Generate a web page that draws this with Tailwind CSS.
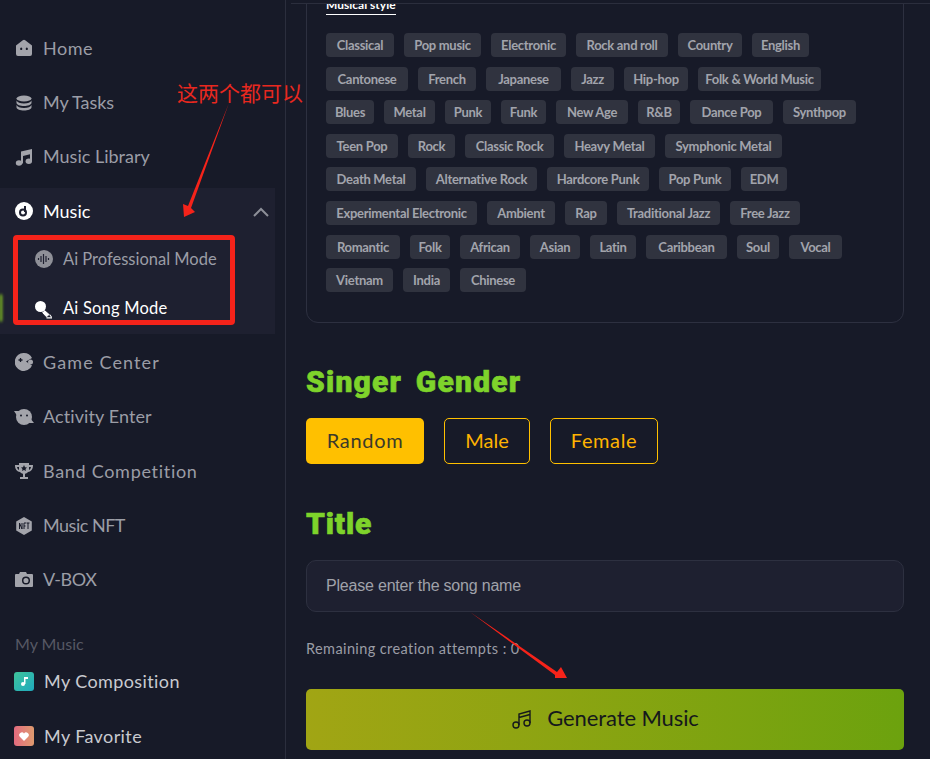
<!DOCTYPE html>
<html lang="en">
<head>
    <meta charset="UTF-8">
    <title>Ai Song Mode</title>
    <script src="https://cdn.jsdelivr.net/npm/@tailwindcss/browser@4"></script>
</head>
<body class="bg-[#171a28] font-['Lato',sans-serif]">
<div class="relative w-[930px] h-[759px] overflow-hidden flex">

    <!-- sidebar -->
    <aside class="w-[286px] h-full shrink-0 border-r border-[#2b2e3d] pt-[21px] text-[18px] text-[#9b9da6]">
        <a class="h-[54.4px] pl-[15px] flex items-center gap-[10px] tracking-[0.5px]">
            <svg class="w-[18px] h-[18px]" viewBox="0 0 18 18" fill="#a3a4ab"><path fill-rule="evenodd" d="M1 6.500 7.800 1.200a2 2 0 0 1 2.400 0L17 6.500V15a2 2 0 0 1-2 2H3a2 2 0 0 1-2-2zM6.200 8.500a1.100 1.300 0 1 0 .01 0zM11.800 8.500a1.100 1.300 0 1 0 .01 0z"/></svg>
            Home
        </a>
        <a class="h-[54.4px] pl-[15px] flex items-center gap-[10px] tracking-[-0.1px]">
            <svg class="w-[18px] h-[18px]" viewBox="0 0 18 18" fill="#a3a4ab"><ellipse cx="9" cy="4.500" rx="7.500" ry="3"/><path d="M1.500 6.500c1 2 3.500 3 7.500 3s6.500-1 7.500-3V9c-.5 2-3.500 3-7.500 3s-7-1-7.500-3z"/><path d="M1.500 11c1 2 3.500 3 7.500 3s6.500-1 7.500-3v2.500c-.5 2-3.500 3-7.500 3s-7-1-7.500-3z"/></svg>
            My Tasks
        </a>
        <a class="h-[54.4px] pl-[15px] flex items-center gap-[10px] tracking-[0px]">
            <svg class="w-[18px] h-[18px]" viewBox="0 0 18 18" fill="#a3a4ab"><path d="M6 3.500 17 1v12.500h-2V6.300L8 7.900v7.600H6z"/><ellipse cx="4" cy="15" rx="3.200" ry="2.700"/><ellipse cx="13.800" cy="13.300" rx="3.200" ry="2.700"/></svg>
            Music Library
        </a>

        <!-- music group -->
        <div class="mt-[4px] w-[275px] h-[146px] bg-[#1e2030]">
            <a class="h-[46px] pl-[15px] pr-[6px] flex items-center gap-[10px] text-white">
                <svg class="w-[18px] h-[18px]" viewBox="0 0 18 18"><circle cx="9" cy="9" r="9" fill="#fff"/><circle cx="8" cy="10.500" r="3" fill="none" stroke="#1e2030" stroke-width="2"/><path d="M10 10V4" stroke="#1e2030" stroke-width="2"/></svg>
                Music
                <svg class="ml-auto mt-[2px] w-[16px] h-[10px]" viewBox="0 0 16 10" fill="none" stroke="#8d8f98" stroke-width="2"><path d="M1 9l7-7 7 7"/></svg>
            </a>
            <a class="h-[50px] pl-[35px] flex items-center gap-[10px] text-[16.500px] text-[#9b9da6]">
                <svg class="w-[18px] h-[18px]" viewBox="0 0 18 18"><circle cx="9" cy="9" r="9" fill="#8f9098"/><path d="M3.500 8v2M6 6v6M8.500 4v10M11 6v6M13.500 8v2" stroke="#1e2030" stroke-width="1.200"/></svg>
                Ai Professional Mode
            </a>
            <a class="h-[49px] pl-[35px] flex items-center gap-[10px] text-[16.500px] tracking-[0.2px] text-white">
                <svg class="w-[18px] h-[18px] mt-[2px]" viewBox="0 0 18 18" fill="none"><circle cx="5.500" cy="5.500" r="5.500" fill="#fff"/><path d="M9.500 9.500 14 13.500 11.500 15.800 7.500 11.500" fill="#fff" stroke="#fff" stroke-width="1"/><path d="M11.500 16.800h5.500M14.500 13.500l2 2.500" stroke="#fff" stroke-width="1.200"/></svg>
                Ai Song Mode
            </a>
        </div>

        <div class="mt-[1px]">
            <a class="h-[54.4px] pl-[15px] flex items-center gap-[10px] tracking-[1.1px]">
                <svg class="w-[18px] h-[18px]" viewBox="0 0 18 18"><path fill="#a3a4ab" d="M9 0a9 9 0 0 1 8 5l-6 3.500 6 4A9 9 0 1 1 9 0z"/><circle cx="15.500" cy="9" r="2.500" fill="#a3a4ab"/><path d="M3.500 7h4M5.500 5v4" stroke="#171a28" stroke-width="1.300"/></svg>
                Game Center
            </a>
            <a class="h-[54.4px] pl-[15px] flex items-center gap-[10px] tracking-[0.1px]">
                <svg class="w-[20px] h-[18px] -ml-[1px] mr-[-1px]" viewBox="0 0 20 18" fill="#a3a4ab"><circle cx="10" cy="9" r="8"/><path d="M0 3 5 3 4 9zM20 15 15 15 16 10z"/><circle cx="7" cy="7.500" r="1" fill="#171a28"/><circle cx="13" cy="7.500" r="1" fill="#171a28"/></svg>
                Activity Enter
            </a>
            <a class="h-[54.4px] pl-[15px] flex items-center gap-[10px] tracking-[0.7px]">
                <svg class="w-[18px] h-[18px]" viewBox="0 0 18 18"><path fill="#a3a4ab" d="M4 1h10v2h4c0 4-1.500 6.500-5 7-.5.8-1.500 1.500-3 1.700V15h3v2H5v-2h3v-3.300C6.500 11.500 5.500 10.800 5 10 1.500 9.500 0 7 0 3h4zM2 5c.3 1.500 1 2.500 2 3V5zM16 5h-2v3c1-.5 1.700-1.500 2-3z"/><path fill="#171a28" d="M9 3l1 2.200 2 .2-1.500 1.500.5 2.100-2-1.100-2 1.100.5-2.100L6 5.400l2-.2z"/></svg>
                Band Competition
            </a>
            <a class="h-[54.4px] pl-[15px] flex items-center gap-[10px] tracking-[-0.5px]">
                <svg class="w-[18px] h-[18px]" viewBox="0 0 18 18"><path fill="#a3a4ab" d="M9 0l7.800 4.500v9L9 18l-7.800-4.500v-9z"/><path d="M4.500 12V6l2.500 6V6M9 12V6h2M9 9h1.500M11.500 6h3M13 6v6" fill="none" stroke="#171a28" stroke-width="1"/></svg>
                Music NFT
            </a>
            <a class="h-[54.4px] pl-[15px] flex items-center gap-[10px] tracking-[-0.4px]">
                <svg class="w-[18px] h-[18px]" viewBox="0 0 18 18"><path fill="#a3a4ab" d="M1 3h3l1-2h6l1 2h5a1 1 0 0 1 1 1v11a1 1 0 0 1-1 1H1a1 1 0 0 1-1-1V4a1 1 0 0 1 1-1z"/><circle cx="11" cy="9.500" r="3.300" fill="none" stroke="#171a28" stroke-width="1.500"/></svg>
                V-BOX
            </a>
        </div>

        <p class="mt-[25px] pl-[15px] text-[16px] leading-[24px] text-[#565864]">My Music</p>
        <a class="h-[50px] pl-[14px] flex items-center gap-[10px] tracking-[0.4px] text-[#c9cad0]">
            <span class="w-[20px] h-[19px] rounded-[3px] bg-gradient-to-br from-[#3fc49a] to-[#1fa9bd] flex items-center justify-center">
                <svg class="w-[9px] h-[9px]" viewBox="0 0 9 9" fill="#fff"><path d="M4 0h4v2H5.500v5H4z"/><circle cx="3" cy="7" r="2"/></svg>
            </span>
            My Composition
        </a>
        <a class="mt-[5px] h-[50px] pl-[14px] flex items-center gap-[10px] tracking-[0.4px] text-[#c9cad0]">
            <span class="w-[20px] h-[20px] rounded-[3px] bg-gradient-to-r from-[#e26a7e] to-[#de9a6e] flex items-center justify-center">
                <svg class="w-[10px] h-[9px]" viewBox="0 0 10 9" fill="#fff"><path d="M5 9 .8 4.800A2.600 2.600 0 0 1 5 1.500a2.600 2.600 0 0 1 4.200 3.300z"/></svg>
            </span>
            My Favorite
        </a>
    </aside>

    <!-- main -->
    <main class="flex-1 min-w-0 flex flex-col">
        <div class="h-[4px] shrink-0 ml-[5px] border-b border-[#2b2e3d]"></div>
        <div class="flex-1 overflow-hidden pl-[20px] pr-[26px]">
            <section class="-mt-[33px] h-[352px] rounded-b-[12px] border border-[#2d3040] px-[19px] pt-[19px]">
                <span class="inline-block border-b border-white text-[12px] leading-[11px] pb-[4px] font-bold text-white">Musical style</span>
                <div class="mt-[18px] flex flex-col gap-[9.600px] text-[13px] font-bold tracking-[-0.3px] text-[#a2a4ac] text-center leading-[24px]">
                    <div class="flex gap-[10px]">
                        <span class="w-[68px] h-[24px] rounded-[4px] bg-[#30333f]">Classical</span>
                        <span class="w-[77px] h-[24px] rounded-[4px] bg-[#30333f]">Pop music</span>
                        <span class="w-[75px] h-[24px] rounded-[4px] bg-[#30333f]">Electronic</span>
                        <span class="w-[92px] h-[24px] rounded-[4px] bg-[#30333f]">Rock and roll</span>
                        <span class="w-[64px] h-[24px] rounded-[4px] bg-[#30333f]">Country</span>
                        <span class="w-[57px] h-[24px] rounded-[4px] bg-[#30333f]">English</span>
                    </div>
                    <div class="flex gap-[10px]">
                        <span class="w-[82px] h-[24px] rounded-[4px] bg-[#30333f]">Cantonese</span>
                        <span class="w-[58px] h-[24px] rounded-[4px] bg-[#30333f]">French</span>
                        <span class="w-[75px] h-[24px] rounded-[4px] bg-[#30333f]">Japanese</span>
                        <span class="w-[43px] h-[24px] rounded-[4px] bg-[#30333f]">Jazz</span>
                        <span class="w-[64px] h-[24px] rounded-[4px] bg-[#30333f]">Hip-hop</span>
                        <span class="w-[123px] h-[24px] rounded-[4px] bg-[#30333f]">Folk &amp; World Music</span>
                    </div>
                    <div class="flex gap-[10px]">
                        <span class="w-[48px] h-[24px] rounded-[4px] bg-[#30333f]">Blues</span>
                        <span class="w-[51px] h-[24px] rounded-[4px] bg-[#30333f]">Metal</span>
                        <span class="w-[46px] h-[24px] rounded-[4px] bg-[#30333f]">Punk</span>
                        <span class="w-[45px] h-[24px] rounded-[4px] bg-[#30333f]">Funk</span>
                        <span class="w-[72px] h-[24px] rounded-[4px] bg-[#30333f]">New Age</span>
                        <span class="w-[42px] h-[24px] rounded-[4px] bg-[#30333f]">R&amp;B</span>
                        <span class="w-[83px] h-[24px] rounded-[4px] bg-[#30333f]">Dance Pop</span>
                        <span class="w-[73px] h-[24px] rounded-[4px] bg-[#30333f]">Synthpop</span>
                    </div>
                    <div class="flex gap-[10px]">
                        <span class="w-[72px] h-[24px] rounded-[4px] bg-[#30333f]">Teen Pop</span>
                        <span class="w-[47px] h-[24px] rounded-[4px] bg-[#30333f]">Rock</span>
                        <span class="w-[89px] h-[24px] rounded-[4px] bg-[#30333f]">Classic Rock</span>
                        <span class="w-[91px] h-[24px] rounded-[4px] bg-[#30333f]">Heavy Metal</span>
                        <span class="w-[117px] h-[24px] rounded-[4px] bg-[#30333f]">Symphonic Metal</span>
                    </div>
                    <div class="flex gap-[10px]">
                        <span class="w-[90px] h-[24px] rounded-[4px] bg-[#30333f]">Death Metal</span>
                        <span class="w-[111px] h-[24px] rounded-[4px] bg-[#30333f]">Alternative Rock</span>
                        <span class="w-[102px] h-[24px] rounded-[4px] bg-[#30333f]">Hardcore Punk</span>
                        <span class="w-[72px] h-[24px] rounded-[4px] bg-[#30333f]">Pop Punk</span>
                        <span class="w-[46px] h-[24px] rounded-[4px] bg-[#30333f]">EDM</span>
                    </div>
                    <div class="flex gap-[10px]">
                        <span class="w-[151px] h-[24px] rounded-[4px] bg-[#30333f]">Experimental Electronic</span>
                        <span class="w-[68px] h-[24px] rounded-[4px] bg-[#30333f]">Ambient</span>
                        <span class="w-[42px] h-[24px] rounded-[4px] bg-[#30333f]">Rap</span>
                        <span class="w-[103px] h-[24px] rounded-[4px] bg-[#30333f]">Traditional Jazz</span>
                        <span class="w-[70px] h-[24px] rounded-[4px] bg-[#30333f]">Free Jazz</span>
                    </div>
                    <div class="flex gap-[10px]">
                        <span class="w-[74px] h-[24px] rounded-[4px] bg-[#30333f]">Romantic</span>
                        <span class="w-[40px] h-[24px] rounded-[4px] bg-[#30333f]">Folk</span>
                        <span class="w-[60px] h-[24px] rounded-[4px] bg-[#30333f]">African</span>
                        <span class="w-[50px] h-[24px] rounded-[4px] bg-[#30333f]">Asian</span>
                        <span class="w-[46px] h-[24px] rounded-[4px] bg-[#30333f]">Latin</span>
                        <span class="w-[81px] h-[24px] rounded-[4px] bg-[#30333f]">Caribbean</span>
                        <span class="w-[42px] h-[24px] rounded-[4px] bg-[#30333f]">Soul</span>
                        <span class="w-[53px] h-[24px] rounded-[4px] bg-[#30333f]">Vocal</span>
                    </div>
                    <div class="flex gap-[10px]">
                        <span class="w-[67px] h-[24px] rounded-[4px] bg-[#30333f]">Vietnam</span>
                        <span class="w-[47px] h-[24px] rounded-[4px] bg-[#30333f]">India</span>
                        <span class="w-[66px] h-[24px] rounded-[4px] bg-[#30333f]">Chinese</span>
                    </div>
                </div>
            </section>

            <h2 class="mt-[39px] text-[30px] leading-[40px] font-black tracking-[1.2px] [word-spacing:5px] [-webkit-text-stroke:0.6px_#7ed32b] font-['Roboto',sans-serif] text-[#7ed32b]">Singer Gender</h2>
            <div class="mt-[16px] flex gap-[20px] text-[20px]">
                <button class="w-[118px] h-[46px] pb-[2px] rounded-[5px] bg-[#ffc000] text-[#3b3a2a] tracking-[0.7px]">Random</button>
                <button class="w-[86px] h-[46px] pb-[2px] rounded-[5px] border border-[#ffc000] text-[#ffb300]">Male</button>
                <button class="w-[108px] h-[46px] pb-[2px] rounded-[5px] border border-[#ffc000] text-[#ffb300] tracking-[0.6px]">Female</button>
            </div>

            <h2 class="mt-[40px] text-[30px] leading-[40px] font-black tracking-[0.8px] [-webkit-text-stroke:0.6px_#7ed32b] font-['Roboto',sans-serif] text-[#7ed32b]">Title</h2>
            <div class="mt-[16px] h-[52px] rounded-[10px] border border-[#2d3040] bg-[#1e2030] pl-[19px] flex items-center text-[16px] font-['Liberation_Sans',sans-serif] tracking-[-0.2px] text-[#a0a2aa]">Please enter the song name</div>
            <p class="mt-[27px] text-[14.500px] tracking-[0.4px] leading-[20px] text-[#9b9da6]">Remaining creation attempts : 0</p>
            <button class="mt-[30px] w-full h-[61px] pb-[4px] rounded-[5px] bg-gradient-to-r from-[#a1a514] to-[#6ca20e] flex items-center justify-center gap-[14px] text-[22px] tracking-[-0.1px] text-[#15181c]">
                <svg class="w-[22px] h-[20px] mt-[3px]" viewBox="0 0 22 20" fill="none" stroke="#15181c" stroke-width="1.400"><path d="M8 16V5L19 2v12M8 8.500 19 5.500"/><circle cx="5" cy="16" r="3"/><circle cx="16" cy="14" r="3"/></svg>
                Generate Music
            </button>
        </div>
    </main>

    <!-- screenshot annotations -->
    <div class="absolute left-0 top-[294px] w-[2px] h-[28px] bg-[#9be81f] rounded-r-full blur-[1.500px]"></div>
    <div class="absolute left-[13px] top-[235px] w-[222px] h-[90px] rounded-[4px] border-[5px] border-[#f5231a]"></div>
    <span class="absolute left-[177px] top-[77px] text-[21px] leading-[30px] text-[#e8281f] font-['Noto_Sans_CJK_SC',sans-serif]">这两个都可以</span>
    <svg class="absolute left-0 top-0 w-[930px] h-[759px] pointer-events-none" viewBox="0 0 930 759" fill="#f5231a">
        <path d="M229 103 L188 206 L183 204 L184 217 L195 212 L191 208 Z"/>
        <path d="M470 612 L557 672 L561 667 L567 678 L555 678 L555 675 Z"/>
    </svg>
</div>
</body>
</html>
